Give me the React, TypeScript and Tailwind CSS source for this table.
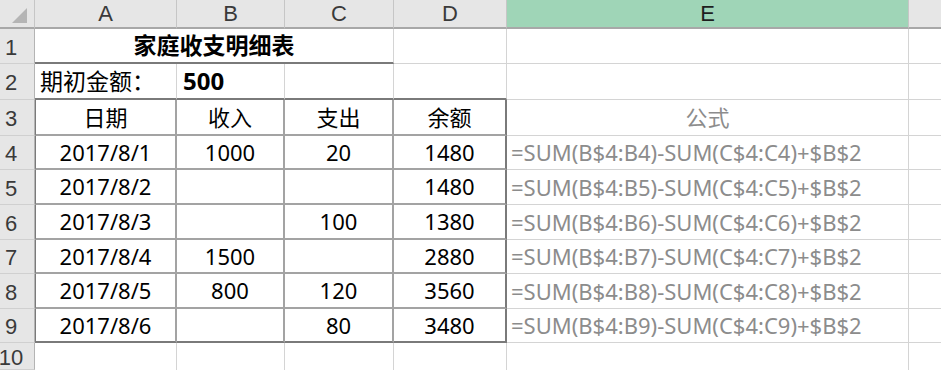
import React from "react";

const FONT = '"Noto Sans", "Noto Sans CJK SC", sans-serif';
const HEAD_FONT = '"Liberation Sans", "Noto Sans", sans-serif';

const rows = [
  { date: "2017/8/1", inc: "1000", out: "20", bal: "1480", f: "=SUM(B$4:B4)-SUM(C$4:C4)+$B$2" },
  { date: "2017/8/2", inc: "", out: "", bal: "1480", f: "=SUM(B$4:B5)-SUM(C$4:C5)+$B$2" },
  { date: "2017/8/3", inc: "", out: "100", bal: "1380", f: "=SUM(B$4:B6)-SUM(C$4:C6)+$B$2" },
  { date: "2017/8/4", inc: "1500", out: "", bal: "2880", f: "=SUM(B$4:B7)-SUM(C$4:C7)+$B$2" },
  { date: "2017/8/5", inc: "800", out: "120", bal: "3560", f: "=SUM(B$4:B8)-SUM(C$4:C8)+$B$2" },
  { date: "2017/8/6", inc: "", out: "80", bal: "3480", f: "=SUM(B$4:B9)-SUM(C$4:C9)+$B$2" },
];

// row heights to match the sheet
const dataHeights = ["h-[34px]", "h-[35px]", "h-[35px]", "h-[34px]", "h-[35px]", "h-[34px]"];

function RowHead({ n, h }: { n: number; h: string }) {
  return (
    <div
      className={`${h} flex items-center justify-center border-r border-b border-r-[#b4b4b4] border-b-[#d0d0d0] bg-[#e6e6e6] pt-[3px] pr-[12px] text-[22px] leading-none text-[#3a3a3a]`}
      style={{ fontFamily: HEAD_FONT }}
    >
      {n}
    </div>
  );
}

export default function App() {
  return (
    <div
      className="h-[370px] w-[941px] overflow-hidden bg-white text-black"
      style={{ fontFamily: FONT }}
    >
      <div className="grid grid-cols-[35px_142px_108px_109px_113px_402px_1fr]">
        {/* column headers */}
        <div className="h-[29px] border-r border-b-2 border-r-[#c6c6c6] border-b-[#a8a8a8] bg-[#e6e6e6] pl-[12px] pt-[8px]">
          <svg width="15" height="15" viewBox="0 0 15 15">
            <polygon points="15,0 15,15 0,15" fill="#b5b5b5" />
          </svg>
        </div>
        {["A", "B", "C", "D"].map((c) => (
          <div
            key={c}
            className="flex h-[29px] items-center justify-center border-r border-b-2 border-r-[#c6c6c6] border-b-[#a8a8a8] bg-[#e6e6e6] text-[22px] leading-none text-[#3a3a3a]"
            style={{ fontFamily: HEAD_FONT }}
          >
            {c}
          </div>
        ))}
        <div
          className="flex h-[29px] items-center justify-center border-r border-b-2 border-r-[#c6c6c6] border-b-[#a8a8a8] bg-[#9fd5b7] text-[22px] leading-none text-[#1e1e1e]"
          style={{ fontFamily: HEAD_FONT }}
        >
          E
        </div>
        <div className="h-[29px] border-b-2 border-b-[#a8a8a8] bg-[#e6e6e6]" />

        {/* row 1 */}
        <RowHead n={1} h="h-[35px]" />
        <div className="col-span-3 flex h-[35px] items-center justify-center border-r border-b-2 border-r-[#d4d4d4] border-b-[#7a7a7a] text-[23px] font-bold">
          家庭收支明细表
        </div>
        <div className="h-[35px] border-r border-b border-[#d4d4d4]" />
        <div className="h-[35px] border-r border-b border-[#d4d4d4]" />
        <div className="h-[35px] border-b border-[#d4d4d4]" />

        {/* row 2 */}
        <RowHead n={2} h="h-[36px]" />
        <div className="flex h-[36px] items-center border-r border-b-2 border-r-[#d4d4d4] border-b-[#7a7a7a] pl-[5px] text-[23px]">
          期初金额：
        </div>
        <div className="flex h-[36px] items-center border-r border-b-2 border-r-[#d4d4d4] border-b-[#7a7a7a] pl-[6px] text-[24px] font-bold">
          500
        </div>
        <div className="h-[36px] border-r border-b-2 border-r-[#d4d4d4] border-b-[#7a7a7a]" />
        <div className="h-[36px] border-r border-b-2 border-r-[#d4d4d4] border-b-[#7a7a7a]" />
        <div className="h-[36px] border-r border-b border-[#d4d4d4]" />
        <div className="h-[36px] border-b border-[#d4d4d4]" />

        {/* row 3: table header */}
        <RowHead n={3} h="h-[36px]" />
        {["日期", "收入", "支出"].map((t, i) => (
          <div
            key={t}
            className={`flex h-[36px] items-center justify-center border-r-2 border-b-2 border-[#a3a3a3] text-[22px] ${
              i === 0 ? "border-l border-l-[#7a7a7a]" : ""
            }`}
          >
            {t}
          </div>
        ))}
        <div className="flex h-[36px] items-center justify-center border-r-2 border-b-2 border-r-[#7a7a7a] border-b-[#a3a3a3] text-[22px]">
          余额
        </div>
        <div className="flex h-[36px] items-center justify-center border-r border-b border-[#d4d4d4] text-[22px] text-[#8c8c8c]">
          公式
        </div>
        <div className="h-[36px] border-b border-[#d4d4d4]" />

        {/* data rows */}
        {rows.map((r, i) => {
          const h = dataHeights[i];
          const last = i === rows.length - 1;
          const bb = last ? "border-b-[#7a7a7a]" : "border-b-[#a3a3a3]";
          return (
            <React.Fragment key={r.date}>
              <RowHead n={i + 4} h={h} />
              <div
                className={`${h} flex items-center justify-center border-l border-r-2 border-b-2 border-l-[#7a7a7a] border-r-[#a3a3a3] ${bb} text-[22px]`}
              >
                {r.date}
              </div>
              <div className={`${h} flex items-center justify-center border-r-2 border-b-2 border-r-[#a3a3a3] ${bb} text-[22px]`}>
                {r.inc}
              </div>
              <div className={`${h} flex items-center justify-center border-r-2 border-b-2 border-r-[#a3a3a3] ${bb} text-[22px]`}>
                {r.out}
              </div>
              <div className={`${h} flex items-center justify-center border-r-2 border-b-2 border-r-[#7a7a7a] ${bb} text-[22px]`}>
                {r.bal}
              </div>
              <div className={`${h} flex items-center border-r border-b border-[#d4d4d4] pl-[4px] text-[22px] text-[#8c8c8c] whitespace-nowrap`}>
                {r.f}
              </div>
              <div className={`${h} border-b border-[#d4d4d4]`} />
            </React.Fragment>
          );
        })}

        {/* row 10 */}
        <RowHead n={10} h="h-[27px]" />
        <div className="h-[27px] border-r border-[#d4d4d4]" />
        <div className="h-[27px] border-r border-[#d4d4d4]" />
        <div className="h-[27px] border-r border-[#d4d4d4]" />
        <div className="h-[27px] border-r border-[#d4d4d4]" />
        <div className="h-[27px] border-r border-[#d4d4d4]" />
        <div className="h-[27px]" />
      </div>
    </div>
  );
}
